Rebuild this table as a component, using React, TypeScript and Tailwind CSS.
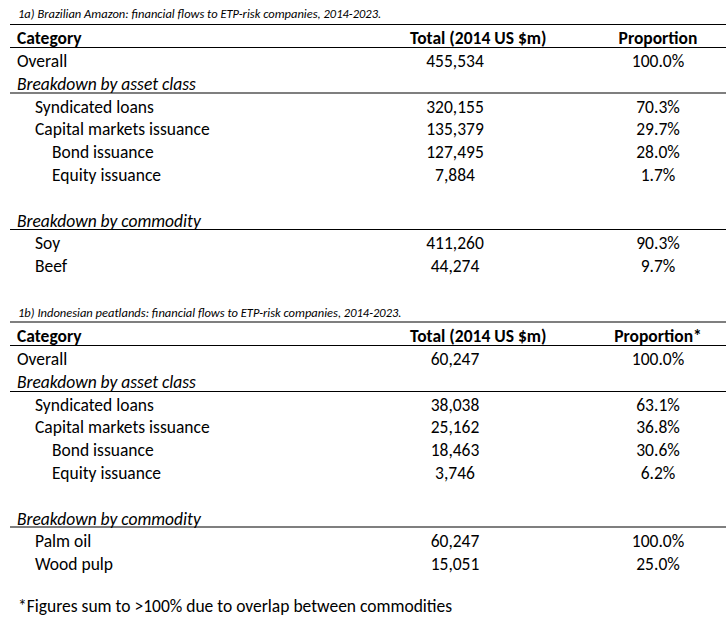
import React from "react";

type Row = {
  label: string;
  total?: string;
  prop?: string;
  indent?: 0 | 1 | 2;
  italic?: boolean;
  border?: "black" | "gray";
};

const table1a: Row[] = [
  { label: "Overall", total: "455,534", prop: "100.0%" },
  { label: "Breakdown by asset class", italic: true, border: "gray" },
  { label: "Syndicated loans", total: "320,155", prop: "70.3%", indent: 1 },
  { label: "Capital markets issuance", total: "135,379", prop: "29.7%", indent: 1 },
  { label: "Bond issuance", total: "127,495", prop: "28.0%", indent: 2 },
  { label: "Equity issuance", total: "7,884", prop: "1.7%", indent: 2 },
  { label: "" },
  { label: "Breakdown by commodity", italic: true, border: "black" },
  { label: "Soy", total: "411,260", prop: "90.3%", indent: 1 },
  { label: "Beef", total: "44,274", prop: "9.7%", indent: 1 },
];

const table1b: Row[] = [
  { label: "Overall", total: "60,247", prop: "100.0%" },
  { label: "Breakdown by asset class", italic: true, border: "black" },
  { label: "Syndicated loans", total: "38,038", prop: "63.1%", indent: 1 },
  { label: "Capital markets issuance", total: "25,162", prop: "36.8%", indent: 1 },
  { label: "Bond issuance", total: "18,463", prop: "30.6%", indent: 2 },
  { label: "Equity issuance", total: "3,746", prop: "6.2%", indent: 2 },
  { label: "" },
  { label: "Breakdown by commodity", italic: true, border: "gray" },
  { label: "Palm oil", total: "60,247", prop: "100.0%", indent: 1 },
  { label: "Wood pulp", total: "15,051", prop: "25.0%", indent: 1 },
];

function DataRow({ r }: { r: Row }) {
  const border =
    r.border === "gray"
      ? "border-b-2 border-[#7f7f7f]"
      : r.border === "black"
      ? "border-b border-black"
      : "";
  const pad = r.indent === 2 ? "pl-[42px]" : r.indent === 1 ? "pl-[25px]" : "pl-[7px]";
  return (
    <div className={`grid grid-cols-[370px_150px_1fr] h-[22.8px] items-center ${border}`}>
      <div className={`${pad} ${r.italic ? "italic" : ""} whitespace-nowrap`}>{r.label}</div>
      <div className="text-center whitespace-nowrap">{r.total ?? ""}</div>
      <div className="text-center pl-[60px] whitespace-nowrap">{r.prop ?? ""}</div>
    </div>
  );
}

function Table({
  title,
  rows,
  propHeader,
  titleBorder,
  titlePad,
}: {
  title: string;
  rows: Row[];
  propHeader: string;
  titleBorder: string;
  titlePad: string;
}) {
  return (
    <div className="pl-[10px]">
      <div className={`h-[22px] flex items-end ${titleBorder}`}>
        <span className={`italic text-[12.5px] pl-[8px] leading-none ${titlePad} whitespace-nowrap`}>{title}</span>
      </div>
      <div className="grid grid-cols-[370px_150px_1fr] h-[23px] items-center font-bold border-b border-black">
        <div className="pl-[7px]">Category</div>
        <div className="text-center pl-[30px] whitespace-nowrap">Total (2014 US $m)</div>
        <div className="text-center pl-[60px] whitespace-nowrap">{propHeader}</div>
      </div>
      {rows.map((r, i) => (
        <DataRow key={i} r={r} />
      ))}
    </div>
  );
}

export default function App() {
  return (
    <div
      className="w-[726px] h-[621px] bg-white text-black text-[17.5px] overflow-hidden pt-[3px]"
      style={{ fontFamily: "Carlito, Calibri, Lato, 'Open Sans', sans-serif" }}
    >
      <Table
        title="1a) Brazilian Amazon: financial flows to ETP-risk companies, 2014-2023."
        rows={table1a}
        propHeader="Proportion"
        titleBorder="border-b border-black"
        titlePad="pb-[4px]"
      />
      <div className="h-[25px]" />
      <Table
        title="1b) Indonesian peatlands: financial flows to ETP-risk companies, 2014-2023."
        rows={table1b}
        propHeader="Proportion*"
        titleBorder="border-b-2 border-[#7f7f7f]"
        titlePad="pb-[1px]"
      />
      <div className="pl-[18px] pt-[21px] leading-[22px] whitespace-nowrap">*Figures sum to &gt;100% due to overlap between commodities</div>
    </div>
  );
}
